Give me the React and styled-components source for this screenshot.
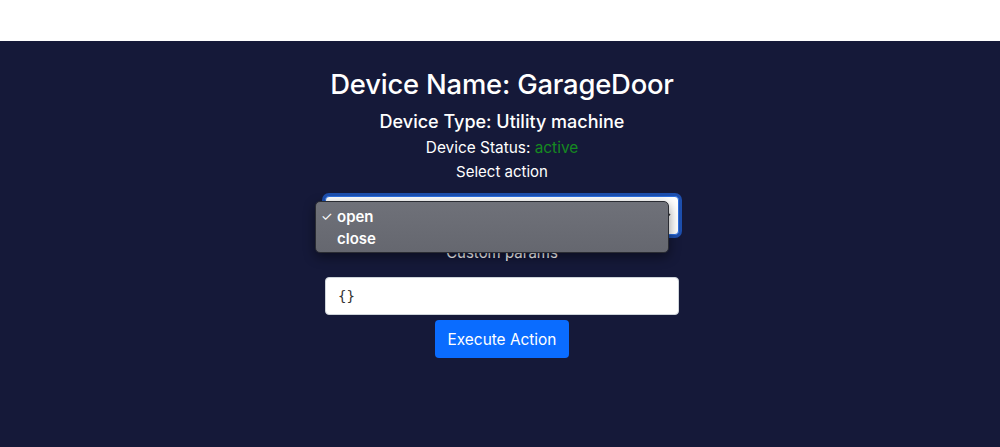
import React from 'react'
import styled, { createGlobalStyle } from 'styled-components'

const GlobalStyle = createGlobalStyle`
  html, body {
    margin: 0;
    padding: 0;
    background: #ffffff;
    font-family: Inter, "Noto Sans", "Liberation Sans", sans-serif;
  }
`

const TopBar = styled.header`
  height: 41px;
  background: #ffffff;
`

const Main = styled.main`
  min-height: 406px;
  background: #151939;
  display: flex;
  flex-direction: column;
  align-items: center;
  padding: 26px 0 0 4px;
  box-sizing: border-box;
  color: #ffffff;
`

const Title = styled.h3`
  margin: 0 0 9px;
  font-size: 27.4px;
  font-weight: 500;
  line-height: 34px;
  letter-spacing: -0.2px;
`

const SubTitle = styled.h5`
  margin: 0 0 2px;
  font-size: 18px;
  font-weight: 500;
  line-height: 24px;
`

const Line = styled.div`
  font-size: ${props => props.size || 15}px;
  line-height: 24px;
  margin-bottom: ${props => props.gap || 0}px;
`

const Status = styled.span`
  color: #168a21;
`

const Field = styled.div`
  position: relative;
  width: 354px;
  margin-bottom: ${props => props.gap || 0}px;
`

const SelectBox = styled.div`
  height: 39px;
  box-sizing: border-box;
  background: #ffffff;
  border: 1px solid #2c6fe0;
  border-radius: 4px;
  box-shadow: 0 0 0 3px #1d4fae;
  display: flex;
  align-items: center;
  justify-content: flex-end;
  padding-right: 6px;
`

const Chevron = styled.svg`
  width: 12px;
  height: 12px;
`

const Menu = styled.div`
  position: absolute;
  left: -10px;
  top: 5px;
  width: 354px;
  height: 52px;
  box-sizing: border-box;
  padding: 3px 0;
  border-radius: 5px;
  border: 1px solid #2a2c33;
  background: linear-gradient(180deg, #6f7179 0%, #65676f 100%);
  box-shadow: 0 4px 12px rgba(0, 0, 0, 0.45);
  color: #ffffff;
  font-size: 15px;
  font-weight: 600;
`

const MenuItem = styled.div`
  display: flex;
  align-items: center;
  height: 22px;
  padding-left: 5px;
`

const Check = styled.span`
  width: 16px;
  font-size: 13px;
  font-weight: 400;
`

const Input = styled.div`
  height: 38px;
  box-sizing: border-box;
  background: #ffffff;
  border: 1px solid #ced4da;
  border-radius: 4px;
  display: flex;
  align-items: center;
  padding-left: 12px;
  color: #333333;
  font-family: "DejaVu Sans Mono", "Liberation Mono", monospace;
  font-size: 14px;
`

const Button = styled.button`
  height: 38px;
  padding: 0 13px;
  border: none;
  border-radius: 4px;
  background: #0a6cff;
  color: #ffffff;
  font-family: inherit;
  font-size: 15.4px;
  font-weight: 400;
`

export default function App() {
  return (
    <>
      <GlobalStyle />
      <TopBar />
      <Main>
        <Title>Device Name: GarageDoor</Title>
        <SubTitle>Device Type: Utility machine</SubTitle>
        <Line size={15.4}>Device Status: <Status>active</Status></Line>
        <Line gap={12}>Select action</Line>
        <Field gap={6}>
          <SelectBox>
            <Chevron viewBox="0 0 12 12">
              <path d="M2 4l4 4 4-4" fill="none" stroke="#333" strokeWidth="1.6" />
            </Chevron>
          </SelectBox>
          <Menu>
            <MenuItem><Check>✓</Check>open</MenuItem>
            <MenuItem><Check />close</MenuItem>
          </Menu>
        </Field>
        <Line gap={12}>Custom params</Line>
        <Field gap={5}>
          <Input>{'{}'}</Input>
        </Field>
        <Button>Execute Action</Button>
      </Main>
    </>
  )
}
